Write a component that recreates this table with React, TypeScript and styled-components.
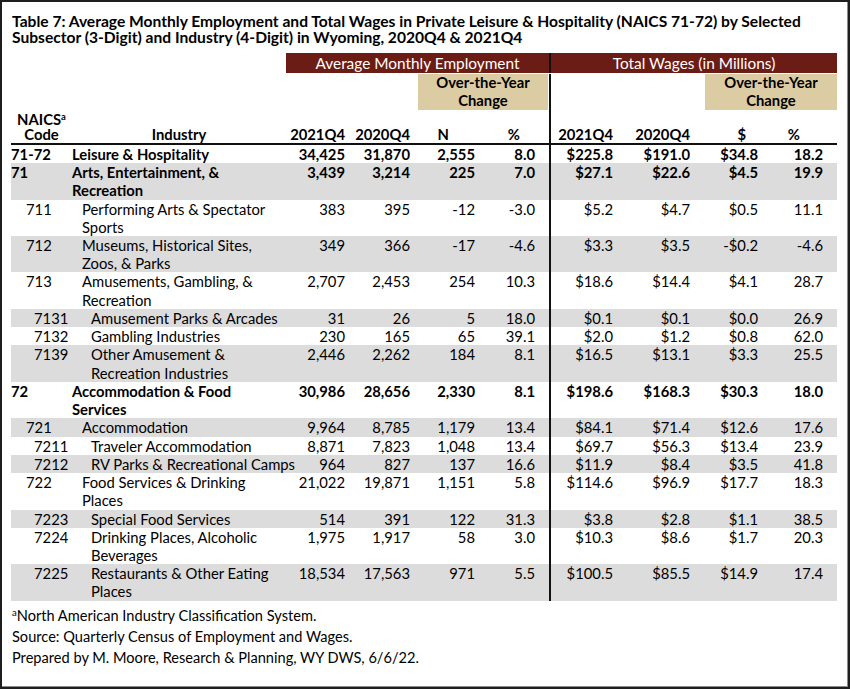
import React from "react";
import styled, { createGlobalStyle } from "styled-components";

const GlobalStyle = createGlobalStyle`
  html, body { margin: 0; padding: 0; background: #ffffff; }
  body { font-family: Lato, "Open Sans", "Liberation Sans", sans-serif; color: #000; }
`;

const COLS = "61px 214px 59px 65px 65px 74px 64px 77px 68px 79px";
const MAROON = "#6b1c14";
const TAN = "#dccca4";
const STRIPE = "#dcdcdc";

const Frame = styled.div`
  box-sizing: border-box;
  width: 850px;
  height: 689px;
  border: 2px solid #1e1e1e;
  box-shadow: inset -1px -1px 0 #8c8c8c;
  padding: 11px 11px 0 9px;
  background: #fff;
  overflow: hidden;
`;

const Title = styled.h1`
  margin: 0 0 7px 0;
  font-size: 15.6px;
  line-height: 16.4px;
  font-weight: 700;
  padding-left: 1px;
  white-space: nowrap;
`;

const Table = styled.div`
  width: 826px;
  font-size: 14.8px;
`;

const Grid = styled.div`
  display: grid;
  grid-template-columns: ${COLS};
`;

const BandRow = styled(Grid)`
  height: 20px;
  margin-bottom: 1px;
`;

const Bar = styled.div<{ $from: number; $to: number; $divider?: boolean }>`
  grid-column: ${(p) => p.$from} / ${(p) => p.$to};
  background: ${MAROON};
  color: #fff;
  text-align: center;
  font-size: 15.4px;
  line-height: 20px;
  border-left: ${(p) => (p.$divider ? "2px solid #111" : "none")};
`;

const TanRow = styled(Grid)`
  height: 36px;
`;

const TanBox = styled.div<{ $from: number; $to: number; $ml: number; $mr: number }>`
  grid-column: ${(p) => p.$from} / ${(p) => p.$to};
  margin-left: ${(p) => p.$ml}px;
  margin-right: ${(p) => p.$mr}px;
  background: ${TAN};
  font-weight: 700;
  text-align: center;
  line-height: 17.5px;
  padding-top: 0.5px;
`;

const DividerCell = styled.div<{ $col: number }>`
  grid-column: ${(p) => p.$col};
  border-left: 2px solid #111;
`;

const HeadRow = styled(Grid)`
  height: 33px;
  align-items: end;
  border-bottom: 2px solid #111;
  font-weight: 700;
  line-height: 15px;
`;

const HeadCell = styled.div<{ $align?: string; $pr?: number; $divider?: boolean }>`
  align-self: stretch;
  display: flex;
  flex-direction: column;
  justify-content: flex-end;
  padding-bottom: 1px;
  text-align: ${(p) => p.$align || "right"};
  padding-right: ${(p) => p.$pr || 0}px;
  border-left: ${(p) => (p.$divider ? "2px solid #111" : "none")};
  white-space: nowrap;
`;

const Sup = styled.sup`
  font-size: 9.5px;
  line-height: 0;
  vertical-align: 5px;
`;

const Row = styled(Grid)<{ $shade: boolean; $bold: boolean }>`
  background: ${(p) => (p.$shade ? STRIPE : "transparent")};
  font-weight: ${(p) => (p.$bold ? 700 : 400)};
  line-height: 18.24px;
`;

const CodeCell = styled.div<{ $level: number }>`
  padding-left: ${(p) => [0, 15, 23][p.$level]}px;
  white-space: nowrap;
`;

const NameCell = styled.div<{ $level: number }>`
  padding-left: ${(p) => [0, 10, 19][p.$level]}px;
  white-space: nowrap;
`;

const NumCell = styled.div<{ $pr?: number; $divider?: boolean }>`
  text-align: right;
  padding-right: ${(p) => p.$pr || 0}px;
  border-left: ${(p) => (p.$divider ? "2px solid #111" : "none")};
  white-space: nowrap;
`;

const Footer = styled.div`
  margin-top: 4px;
  font-size: 14.6px;
  line-height: 21.3px;
  padding-left: 1px;
`;

type RowData = { code: string; lines: string[]; level: number; v: string[] };

const rows: RowData[] = [
  { code: "71-72", lines: ["Leisure & Hospitality"], level: 0, v: ["34,425", "31,870", "2,555", "8.0", "$225.8", "$191.0", "$34.8", "18.2"] },
  { code: "71", lines: ["Arts, Entertainment, &", "Recreation"], level: 0, v: ["3,439", "3,214", "225", "7.0", "$27.1", "$22.6", "$4.5", "19.9"] },
  { code: "711", lines: ["Performing Arts & Spectator", "Sports"], level: 1, v: ["383", "395", "-12", "-3.0", "$5.2", "$4.7", "$0.5", "11.1"] },
  { code: "712", lines: ["Museums, Historical Sites,", "Zoos, & Parks"], level: 1, v: ["349", "366", "-17", "-4.6", "$3.3", "$3.5", "-$0.2", "-4.6"] },
  { code: "713", lines: ["Amusements, Gambling, &", "Recreation"], level: 1, v: ["2,707", "2,453", "254", "10.3", "$18.6", "$14.4", "$4.1", "28.7"] },
  { code: "7131", lines: ["Amusement Parks & Arcades"], level: 2, v: ["31", "26", "5", "18.0", "$0.1", "$0.1", "$0.0", "26.9"] },
  { code: "7132", lines: ["Gambling Industries"], level: 2, v: ["230", "165", "65", "39.1", "$2.0", "$1.2", "$0.8", "62.0"] },
  { code: "7139", lines: ["Other Amusement &", "Recreation Industries"], level: 2, v: ["2,446", "2,262", "184", "8.1", "$16.5", "$13.1", "$3.3", "25.5"] },
  { code: "72", lines: ["Accommodation & Food", "Services"], level: 0, v: ["30,986", "28,656", "2,330", "8.1", "$198.6", "$168.3", "$30.3", "18.0"] },
  { code: "721", lines: ["Accommodation"], level: 1, v: ["9,964", "8,785", "1,179", "13.4", "$84.1", "$71.4", "$12.6", "17.6"] },
  { code: "7211", lines: ["Traveler Accommodation"], level: 2, v: ["8,871", "7,823", "1,048", "13.4", "$69.7", "$56.3", "$13.4", "23.9"] },
  { code: "7212", lines: ["RV Parks & Recreational Camps"], level: 2, v: ["964", "827", "137", "16.6", "$11.9", "$8.4", "$3.5", "41.8"] },
  { code: "722", lines: ["Food Services & Drinking", "Places"], level: 1, v: ["21,022", "19,871", "1,151", "5.8", "$114.6", "$96.9", "$17.7", "18.3"] },
  { code: "7223", lines: ["Special Food Services"], level: 2, v: ["514", "391", "122", "31.3", "$3.8", "$2.8", "$1.1", "38.5"] },
  { code: "7224", lines: ["Drinking Places, Alcoholic", "Beverages"], level: 2, v: ["1,975", "1,917", "58", "3.0", "$10.3", "$8.6", "$1.7", "20.3"] },
  { code: "7225", lines: ["Restaurants & Other Eating", "Places"], level: 2, v: ["18,534", "17,563", "971", "5.5", "$100.5", "$85.5", "$14.9", "17.4"] },
];

const numPad = [0, 0, 0, 14, 0, 0, 0, 14];

export default function App() {
  return (
    <>
      <GlobalStyle />
      <Frame>
        <Title>
          Table 7: Average Monthly Employment and Total Wages in Private Leisure &amp; Hospitality (NAICS 71-72) by Selected
          <br />
          Subsector (3-Digit) and Industry (4-Digit) in Wyoming, 2020Q4 &amp; 2021Q4
        </Title>
        <Table>
          <BandRow>
            <Bar $from={3} $to={7}>Average Monthly Employment</Bar>
            <Bar $from={7} $to={11} $divider>Total Wages (in Millions)</Bar>
          </BandRow>
          <TanRow>
            <TanBox $from={5} $to={7} $ml={8} $mr={1}>
              Over-the-Year
              <br />
              Change
            </TanBox>
            <DividerCell $col={7} />
            <TanBox $from={9} $to={11} $ml={15} $mr={0}>
              Over-the-Year
              <br />
              Change
            </TanBox>
          </TanRow>
          <HeadRow>
            <HeadCell $align="center">
              <span>
                NAICS<Sup>a</Sup>
              </span>
              <span>Code</span>
            </HeadCell>
            <HeadCell $align="center">Industry</HeadCell>
            <HeadCell>2021Q4</HeadCell>
            <HeadCell>2020Q4</HeadCell>
            <HeadCell $pr={26}>N</HeadCell>
            <HeadCell $pr={29}>%</HeadCell>
            <HeadCell $divider $pr={0}>2021Q4</HeadCell>
            <HeadCell $pr={0}>2020Q4</HeadCell>
            <HeadCell $pr={12}>$</HeadCell>
            <HeadCell $pr={37}>%</HeadCell>
          </HeadRow>
          {rows.map((r, i) => (
            <Row key={r.code} $shade={i % 2 === 1} $bold={r.level === 0}>
              <CodeCell $level={r.level}>{r.code}</CodeCell>
              <NameCell $level={r.level}>
                {r.lines.map((l, j) => (
                  <div key={j}>{l}</div>
                ))}
              </NameCell>
              {r.v.map((val, k) => (
                <NumCell key={k} $pr={numPad[k]} $divider={k === 4}>
                  {val}
                </NumCell>
              ))}
            </Row>
          ))}
        </Table>
        <Footer>
          <div>
            <Sup>a</Sup>North American Industry Classification System.
          </div>
          <div>Source: Quarterly Census of Employment and Wages.</div>
          <div>Prepared by M. Moore, Research &amp; Planning, WY DWS, 6/6/22.</div>
        </Footer>
      </Frame>
    </>
  );
}
